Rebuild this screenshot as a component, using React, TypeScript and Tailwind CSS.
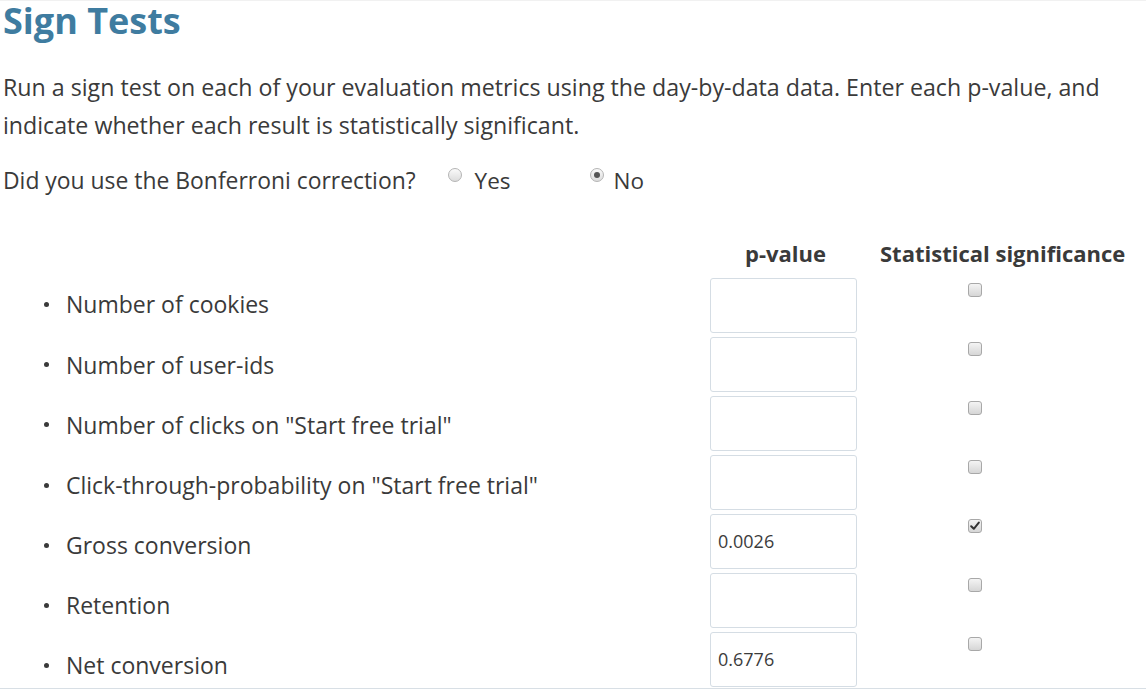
import React from "react";

const rows: { label: string; value: string; checked: boolean }[] = [
  { label: "Number of cookies", value: "", checked: false },
  { label: "Number of user-ids", value: "", checked: false },
  { label: 'Number of clicks on "Start free trial"', value: "", checked: false },
  { label: 'Click-through-probability on "Start free trial"', value: "", checked: false },
  { label: "Gross conversion", value: "0.0026", checked: true },
  { label: "Retention", value: "", checked: false },
  { label: "Net conversion", value: "0.6776", checked: false },
];

function Radio({ checked }: { checked: boolean }) {
  return (
    <div className="w-[14px] h-[14px] rounded-full border border-[#b4b4b4] bg-gradient-to-b from-[#fafafa] to-[#dcdcdc] flex items-center justify-center shrink-0">
      {checked && <div className="w-[6px] h-[6px] rounded-full bg-[#555]" />}
    </div>
  );
}

function Checkbox({ checked }: { checked: boolean }) {
  return (
    <div className="w-[14px] h-[14px] rounded-[3px] border border-[#a8a8a8] bg-gradient-to-b from-[#f4f4f4] to-[#d6d6d6] flex items-center justify-center">
      {checked && (
        <svg width="10" height="10" viewBox="0 0 10 10">
          <path d="M1.2 5.2 L3.8 7.8 L8.8 1.6" fill="none" stroke="#333" strokeWidth="2" strokeLinecap="round" strokeLinejoin="round" />
        </svg>
      )}
    </div>
  );
}

export default function App() {
  return (
    <div className="w-[1146px] h-[689px] bg-white overflow-hidden font-['Open_Sans',sans-serif] text-[#3a3a3a] border-t border-[#f1f1f1] border-b border-b-[#d8dfe5] box-border">
      <h1 className="pl-[3px] text-[36px] leading-[40px] font-bold text-[#3f7ca0]">Sign Tests</h1>
      <p className="mt-[27px] pl-[3px] text-[23.2px] leading-[38px] pr-[30px]">
        Run a sign test on each of your evaluation metrics using the day-by-data data. Enter each p-value, and indicate whether each result is statistically significant.
      </p>
      <div className="mt-[16px] pl-[3px] flex items-start text-[22.5px] leading-[38px]">
        <span className="text-[22.9px] pt-[2px]">Did you use the Bonferroni correction?</span>
        <div className="ml-[32px] mt-[8px]"><Radio checked={false} /></div>
        <span className="ml-[13px] pt-[2px]">Yes</span>
        <div className="ml-[79px] mt-[8px]"><Radio checked={true} /></div>
        <span className="ml-[10px] pt-[2px]">No</span>
      </div>
      <div className="mt-[38px] grid grid-cols-[710px_147px_1fr] text-[22px] leading-[30px] font-bold">
        <div />
        <div className="text-center pl-[4px]">p-value</div>
        <div className="pl-[23px]">Statistical significance</div>
      </div>
      <div className="mt-[10px] grid grid-cols-[710px_147px_1fr]">
        <ul className="flex flex-col -mt-[3px]">
          {rows.map((r) => (
            <li key={r.label} className="h-[60.2px] flex items-center text-[23px] pb-[1px]">
              <div className="ml-[44px] w-[5px] h-[5px] rounded-full bg-[#3a3a3a]" />
              <span className="ml-[17px]">{r.label}</span>
            </li>
          ))}
        </ul>
        <div className="flex flex-col gap-[4px]">
          {rows.map((r) => (
            <div key={r.label} className="h-[55px] border border-[#d5dde4] rounded-[3px] flex items-center pl-[7px] text-[18px] text-[#3c3c3c]">
              {r.value}
            </div>
          ))}
        </div>
        <div className="flex flex-col gap-[4px]">
          {rows.map((r) => (
            <div key={r.label} className="h-[55px] pl-[111px] pt-[5px]">
              <Checkbox checked={r.checked} />
            </div>
          ))}
        </div>
      </div>
    </div>
  );
}
